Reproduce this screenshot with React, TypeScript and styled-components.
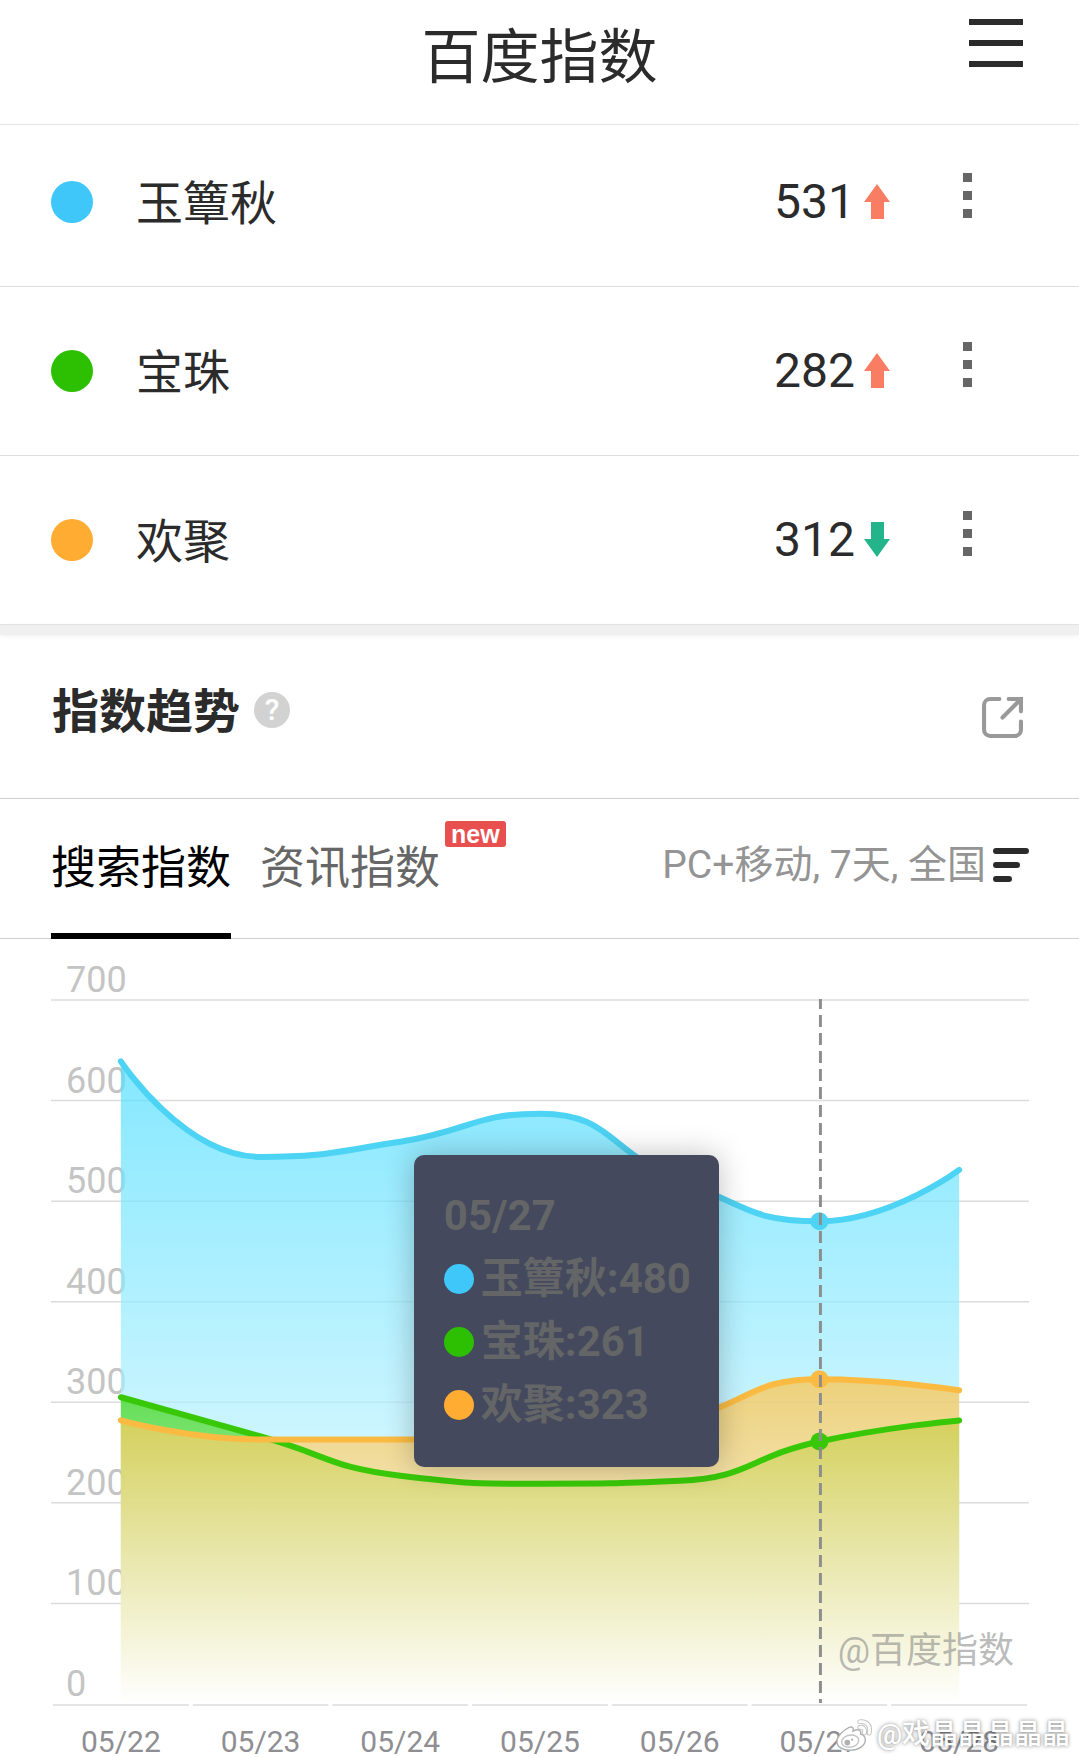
import React from "react";
import styled, { createGlobalStyle } from "styled-components";

const GlobalStyle = createGlobalStyle`
  *, *::before, *::after { box-sizing: border-box; }
  body {
    margin: 0;
    background: #fff;
    color: #2b2b2b;
    font-family: Roboto, "Noto Sans CJK SC", sans-serif;
  }
  button {
    margin: 0;
    padding: 0;
    border: 0;
    background: none;
    color: inherit;
    font: inherit;
    cursor: pointer;
  }
`;

const Page = styled.main`
  position: relative;
  overflow: hidden;
`;

const Header = styled.header`
  display: grid;
  grid-template-columns: 1fr auto 1fr;
  align-items: start;
  height: 125px;
  padding: 19px 56px 0;
  border-bottom: 1px solid #e6e6e6;
`;

const Title = styled.h1`
  grid-column: 2;
  margin: 0;
  font-size: 59px;
  line-height: 78px;
  font-weight: 400;
`;

const MenuButton = styled.button`
  justify-self: end;
  display: flex;
  flex-direction: column;
  gap: 15px;
`;

const MenuBar = styled.span`
  width: 54px;
  height: 6px;
  background: #2b2b2b;
`;

const KeywordList = styled.ul`
  list-style: none;
  margin: -7px 0 0;
  padding: 0;
`;

const KeywordRow = styled.li`
  display: flex;
  align-items: center;
  height: 169px;
  padding: 0 107px 0 51px;
  border-bottom: 1px solid #dedede;
`;

const Dot = styled.span<{ $color: string; $size: number }>`
  flex: none;
  width: ${(p) => p.$size}px;
  height: ${(p) => p.$size}px;
  border-radius: 50%;
  background: ${(p) => p.$color};
`;

const KeywordName = styled.span`
  flex: 1;
  margin-left: 43px;
  padding-top: 4px;
  font-size: 47px;
  line-height: 56px;
`;

const KeywordValue = styled.span`
  margin-right: 9px;
  font-size: 48px;
  line-height: 56px;
`;

const KebabButton = styled.button`
  display: flex;
  flex-direction: column;
  gap: 9px;
  margin-left: 73px;
  padding-bottom: 13px;
`;

const KebabSquare = styled.span`
  width: 9px;
  height: 9px;
  background: #666;
`;

const Divider = styled.div`
  height: 10px;
  margin-bottom: 1px;
  background: #f0f0f0;
  box-shadow: 0 1px 4px #f0f0f0;
`;

const SectionHead = styled.div`
  display: flex;
  align-items: center;
  justify-content: space-between;
  height: 163px;
  padding: 0 56px 0 52px;
  border-bottom: 1px solid #cfcfcf;
`;

const SectionTitle = styled.div`
  display: flex;
  align-items: center;
  gap: 14px;
  padding-bottom: 15px;
`;

const SectionName = styled.h2`
  margin: 0;
  padding-top: 5px;
  font-size: 47px;
  line-height: 56px;
  font-weight: 700;
`;

const HelpButton = styled.button`
  width: 36px;
  height: 36px;
  border-radius: 50%;
  background: #d2d2d2;
  color: #fff;
  font-size: 30px;
  line-height: 36px;
  font-weight: 500;
  text-align: center;
`;

const IconButton = styled.button`
  display: flex;
`;

const TabBar = styled.div`
  display: flex;
  align-items: stretch;
  height: 140px;
  padding: 0 50px 0 51px;
  border-bottom: 1px solid #cfcfcf;
`;

const Tab = styled.button<{ $active?: boolean }>`
  position: relative;
  margin: 0 29px -1px 0;
  padding-top: 6px;
  border-bottom: 6px solid ${(p) => (p.$active ? "#000" : "transparent")};
  color: ${(p) => (p.$active ? "#000" : "#666")};
  font-size: 45px;
  line-height: 56px;
`;

const NewBadge = styled.span`
  position: absolute;
  top: 22px;
  left: 100%;
  margin-left: 5px;
  padding: 0 6px;
  border-radius: 3px;
  background: #e8504f;
  color: #fff;
  font: 700 25px/26px "Liberation Sans", Arial, sans-serif;
`;

const FilterButton = styled.button`
  display: flex;
  align-items: center;
  gap: 7px;
  margin-left: auto;
  padding-bottom: 7px;
  color: #949494;
  font-size: 39px;
  line-height: 56px;
`;

const ChartArea = styled.section`
  position: relative;
  margin: 0 50px 0 51px;
`;

const ChartSvg = styled.svg`
  display: block;
  width: 100%;
  height: auto;
  overflow: visible;
`;

const Tooltip = styled.div`
  position: absolute;
  top: 216px;
  left: 37.1%;
  padding: 29px 28px 31px 30px;
  border-radius: 10px;
  background: #44495d;
  box-shadow: 0 0 30px rgba(0, 0, 0, 0.25);
  color: #636566;
  font-size: 42px;
  line-height: 63px;
  font-weight: 700;
  white-space: nowrap;
`;

const TooltipLine = styled.div`
  display: flex;
  align-items: center;
  gap: 7px;
`;

const SourceMark = styled.span`
  position: absolute;
  right: 15px;
  bottom: 78px;
  color: rgba(120, 120, 120, 0.5);
  font-size: 36px;
  line-height: 56px;
`;

const AuthorMark = styled.div`
  position: absolute;
  right: 9px;
  bottom: 4px;
  display: flex;
  align-items: center;
  gap: 5px;
  color: #fff;
  font-size: 28px;
  line-height: 36px;
  font-weight: 500;
  text-shadow: 0 0 4px rgba(0, 0, 0, 0.4), 0 0 2px rgba(0, 0, 0, 0.2);
`;

type Keyword = {
  id: string;
  name: string;
  value: number;
  up: boolean;
  dot: string;
  line: string;
  fill: string;
  data: number[];
};

const keywords: Keyword[] = [
  { id: "blue", name: "玉簟秋", value: 531, up: true, dot: "#3ec7f8", line: "#4dd3f3", fill: "#50deff", data: [639, 544, 559, 587, 521, 480, 531] },
  { id: "green", name: "宝珠", value: 282, up: true, dot: "#2dbf02", line: "#39c808", fill: "#3bd50f", data: [305, 266, 227, 219, 222, 261, 282] },
  { id: "orange", name: "欢聚", value: 312, up: false, dot: "#ffac33", line: "#fbbb42", fill: "#ffc244", data: [282, 263, 263, 263, 283, 323, 312] },
];

const dates = ["05/22", "05/23", "05/24", "05/25", "05/26", "05/27", "05/28"];
const activeIndex = 5;

const WIDTH = 978;
const HEIGHT = 818;
const TOP = 61;
const BASE = 765;
const STEP = WIDTH / dates.length;

type Point = [number, number];

const xAt = (i: number) => STEP * (i + 0.5);
const yAt = (v: number) => BASE - (v / 700) * (BASE - TOP);
const clamp = (v: number, a: number, b: number) =>
  Math.min(Math.max(v, Math.min(a, b)), Math.max(a, b));

/* Smooth curve whose control points never leave the box of their segment. */
function smoothPath(points: Point[]): string {
  let out = `M${points[0].join(" ")}`;
  let cp: Point = points[0];
  for (let i = 1; i < points.length; i++) {
    const p = points[i];
    const prev = points[i - 1];
    const next = points[i + 1];
    let before: Point = p;
    let after: Point = p;
    if (next) {
      const lenPrev = Math.hypot(p[0] - prev[0], p[1] - prev[1]);
      const lenNext = Math.hypot(next[0] - p[0], next[1] - p[1]);
      const k = (0.5 * lenNext) / (lenNext + lenPrev);
      const ax = clamp(p[0] + (next[0] - prev[0]) * k, next[0], p[0]);
      const ay = clamp(p[1] + (next[1] - prev[1]) * k, next[1], p[1]);
      const bx = clamp(p[0] - ((ax - p[0]) * lenPrev) / lenNext, prev[0], p[0]);
      const by = clamp(p[1] - ((ay - p[1]) * lenPrev) / lenNext, prev[1], p[1]);
      before = [bx, by];
      after = [
        p[0] + ((p[0] - bx) * lenNext) / lenPrev,
        p[1] + ((p[1] - by) * lenNext) / lenPrev,
      ];
    }
    out += `C${cp.join(" ")} ${before.join(" ")} ${p.join(" ")}`;
    cp = after;
  }
  return out;
}

function TrendArrow({ up }: { up: boolean }) {
  return (
    <svg width="26" height="36" viewBox="0 0 26 36" role="img" aria-label={up ? "上升" : "下降"}>
      <path
        d={up ? "M13 0 26 18H20V35H7V18H0Z" : "M13 35 26 17H20V0H7V17H0Z"}
        fill={up ? "#f97d62" : "#23b48b"}
      />
    </svg>
  );
}

function Chart() {
  const grid = [700, 600, 500, 400, 300, 200, 100];
  const curves = keywords.map((k) => smoothPath(k.data.map((v, i): Point => [xAt(i), yAt(v)])));
  return (
    <ChartSvg viewBox={`0 0 ${WIDTH} ${HEIGHT}`} role="img" aria-label="指数趋势">
      <defs>
        {keywords.map((k) => (
          <linearGradient key={k.id} id={`fill-${k.id}`} x1="0" y1="0" x2="0" y2="1">
            <stop offset="0" stopColor={k.fill} />
            <stop offset="1" stopColor="#fff" />
          </linearGradient>
        ))}
      </defs>
      <g stroke="#dcdcdc" strokeWidth="1.5">
        {grid.map((v) => (
          <line key={v} x1="0" x2={WIDTH} y1={yAt(v)} y2={yAt(v)} />
        ))}
        {dates.map((d, i) => (
          <line key={d} x1={STEP * i + 2} x2={STEP * (i + 1) - 2} y1={BASE + 1} y2={BASE + 1} />
        ))}
      </g>
      <g fill="#c4c4c4" fontSize="36">
        {[...grid, 0].map((v) => (
          <text key={v} x="15" y={yAt(v) - 8}>{v}</text>
        ))}
      </g>
      {keywords.map((k, n) => (
        <path
          key={k.id}
          d={`${curves[n]}L${xAt(dates.length - 1)} ${BASE}L${xAt(0)} ${BASE}Z`}
          fill={`url(#fill-${k.id})`}
          fillOpacity="0.7"
        />
      ))}
      {keywords.map((k, n) => (
        <g key={k.id}>
          <path d={curves[n]} fill="none" stroke={k.line} strokeWidth="6" strokeLinecap="round" />
          <circle cx={xAt(activeIndex)} cy={yAt(k.data[activeIndex])} r="9" fill={k.line} />
        </g>
      ))}
      <line
        x1={xAt(activeIndex) + 1}
        x2={xAt(activeIndex) + 1}
        y1={TOP - 1}
        y2={BASE - 1}
        stroke="#8e8e8e"
        strokeWidth="3"
        strokeDasharray="12 6"
        strokeDashoffset="2"
      />
      <g fill="#8e8e93" fontSize="30" textAnchor="middle">
        {dates.map((d, i) => (
          <text key={d} x={xAt(i)} y="813">{d}</text>
        ))}
      </g>
    </ChartSvg>
  );
}

function WeiboLogo() {
  return (
    <svg width="36" height="34" viewBox="0 0 38 34" aria-hidden="true">
      <g fill="none" stroke="#999" strokeOpacity="0.6" strokeWidth="5" strokeLinecap="round">
        <path d="M25 9c4-1 6 2 5 6M25 3c8-1 12 5 10 12" />
      </g>
      <path
        d="M14 9c-7 3-13 10-13 15 0 6 7 9 14 9 9 0 16-5 16-11 0-3-2-5-5-6 1-4-2-6-8-3 1-4-1-5-4-4Z"
        fill="#fff"
        stroke="#b0b0b0"
        strokeWidth="1.5"
      />
      <g fill="none" stroke="#fff" strokeWidth="3" strokeLinecap="round">
        <path d="M25 9c4-1 6 2 5 6M25 3c8-1 12 5 10 12" />
      </g>
      <path
        d="M6 25c0-5 5-8 10-8 4 0 8 2 8 5 0 5-5 8-10 8-4 0-8-2-8-5Z"
        fill="none"
        stroke="#c4c4c4"
        strokeWidth="1.5"
      />
      <circle cx="12" cy="25" r="3" fill="#b0b0b0" />
      <circle cx="17" cy="22" r="1.2" fill="#b0b0b0" />
    </svg>
  );
}

export default function App() {
  return (
    <>
      <GlobalStyle />
      <Page>
        <Header>
          <Title>百度指数</Title>
          <MenuButton aria-label="菜单">
            <MenuBar />
            <MenuBar />
            <MenuBar />
          </MenuButton>
        </Header>

        <KeywordList>
          {keywords.map((k) => (
            <KeywordRow key={k.id}>
              <Dot $color={k.dot} $size={42} />
              <KeywordName>{k.name}</KeywordName>
              <KeywordValue>{k.value}</KeywordValue>
              <TrendArrow up={k.up} />
              <KebabButton aria-label="更多">
                <KebabSquare />
                <KebabSquare />
                <KebabSquare />
              </KebabButton>
            </KeywordRow>
          ))}
        </KeywordList>

        <Divider />

        <SectionHead>
          <SectionTitle>
            <SectionName>指数趋势</SectionName>
            <HelpButton aria-label="帮助">?</HelpButton>
          </SectionTitle>
          <IconButton aria-label="分享">
            <svg width="41" height="41" viewBox="0 0 40 40" fill="none" stroke="#999" strokeWidth="4" strokeLinecap="round">
              <path d="M17 2H8a6 6 0 0 0-6 6v24a6 6 0 0 0 6 6h24a6 6 0 0 0 6-6v-8" />
              <path d="M26 2H38V14M37 3 20 20" />
            </svg>
          </IconButton>
        </SectionHead>

        <TabBar role="tablist">
          <Tab role="tab" aria-selected="true" $active>搜索指数</Tab>
          <Tab role="tab" aria-selected="false">
            资讯指数
            <NewBadge>new</NewBadge>
          </Tab>
          <FilterButton>
            PC+移动, 7天, 全国
            <svg width="36" height="36" viewBox="0 0 36 36" fill="none" stroke="#2b2b2b" strokeWidth="6" strokeLinecap="round" aria-hidden="true">
              <path d="M3 4H33M3 18H24M3 32H16" />
            </svg>
          </FilterButton>
        </TabBar>

        <ChartArea>
          <Chart />
          <Tooltip>
            <div>{dates[activeIndex]}</div>
            {keywords.map((k) => (
              <TooltipLine key={k.id}>
                <Dot $color={k.dot} $size={30} />
                <span>{`${k.name}:${k.data[activeIndex]}`}</span>
              </TooltipLine>
            ))}
          </Tooltip>
          <SourceMark>@百度指数</SourceMark>
        </ChartArea>

        <AuthorMark>
          <WeiboLogo />
          <span>@戏晶晶晶晶晶</span>
        </AuthorMark>
      </Page>
    </>
  );
}
